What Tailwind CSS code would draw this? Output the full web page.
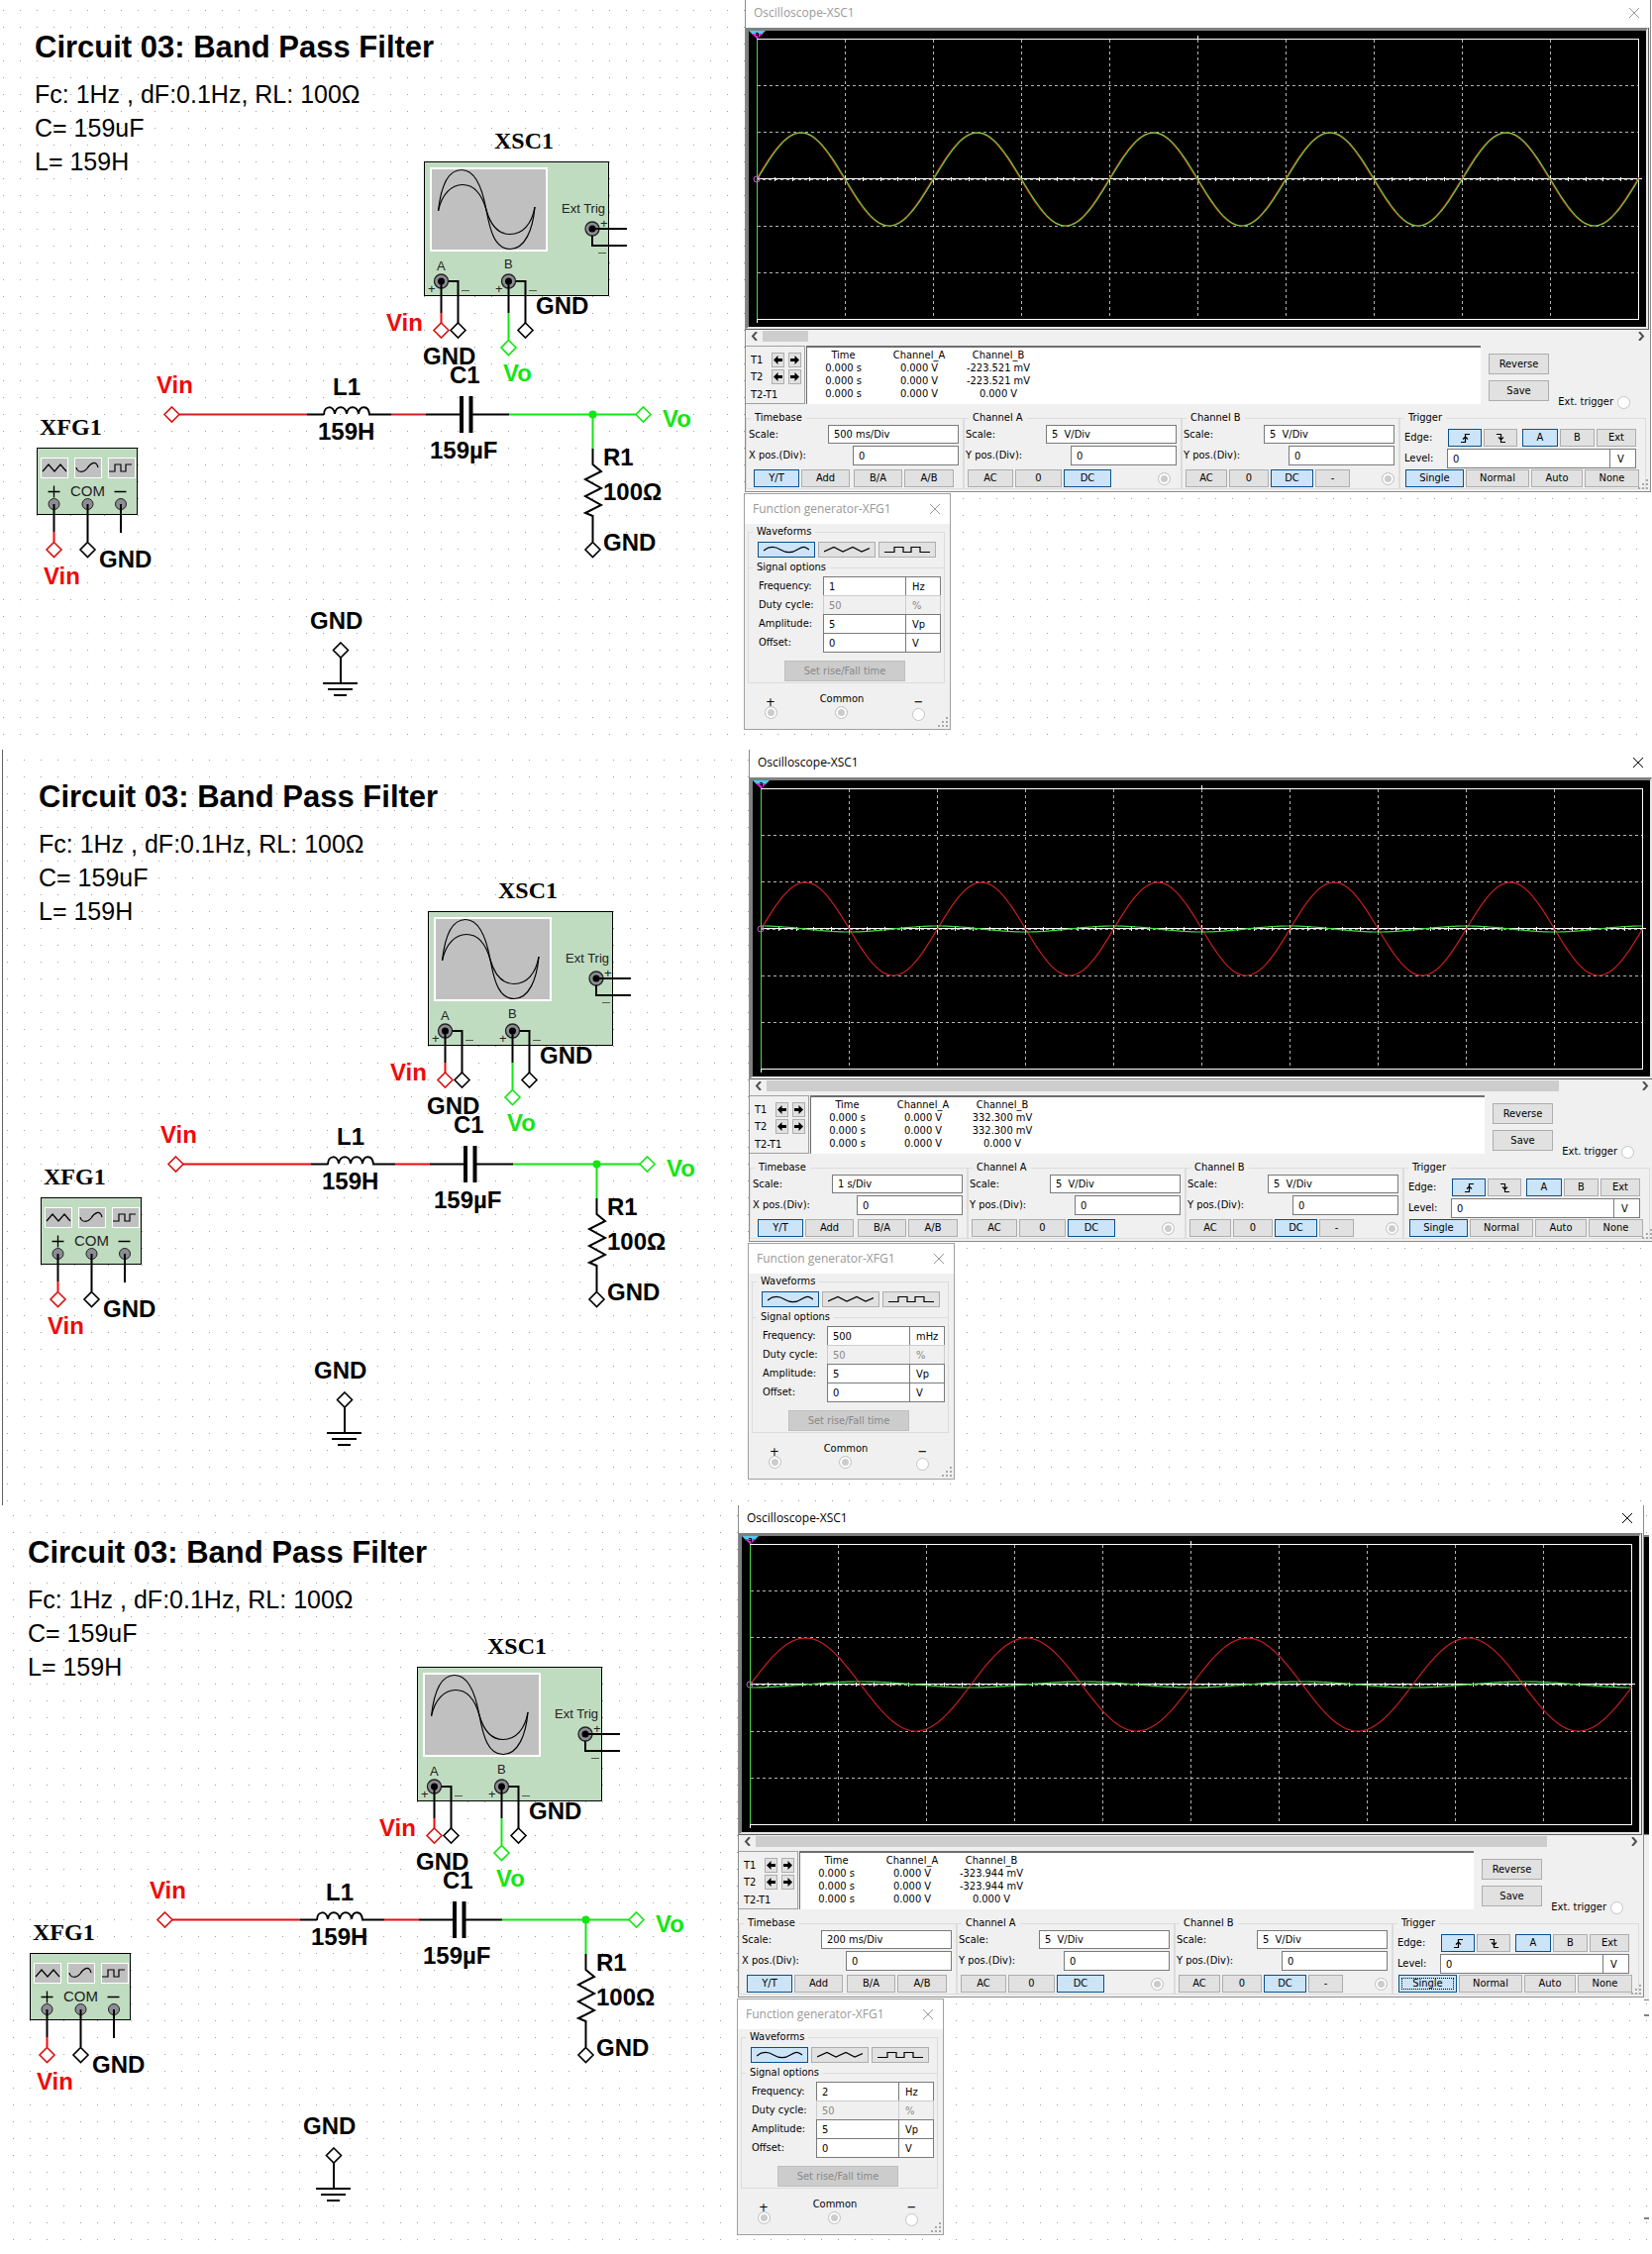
<!DOCTYPE html>
<html lang="en">
<head>
<meta charset="utf-8">
<title>Circuit 03: Band Pass Filter</title>
<script src="https://cdn.jsdelivr.net/npm/@tailwindcss/browser@4"></script>
</head>
<body class="bg-white text-black overflow-x-hidden">
<main id="app" class="flex flex-col"></main>

<script>
// One entry per simulation run
const runs = [
  {
    section: 'min-h-[757px] bg-[position:-5px_2px]', inner: 'pr-px', active: false, thumb: 46,
    scale: '500 ms/Div', b: '-223.521 mV', freq: '1', unit: 'Hz', wire: '#cc1f1f', focus: '',
    traces: [['#b02a12', 47, 178, 0, -1], ['#6fd040', 47, 178, 0, 0]], extra: ''
  },
  {
    section: 'min-h-[763px] bg-[position:-1px_2px]', inner: 'ml-1 -mr-[3px]', active: true, thumb: 800,
    scale: '1 s/Div', b: '332.300 mV', freq: '500', unit: 'mHz', wire: '#e80c0c', focus: '',
    traces: [['#c81e1e', 47, 178, 0, 0], ['#46dc46', 3, 178, Math.PI / 2, 0]],
    extra: '<div class="absolute inset-y-0 left-[2px] w-px bg-[#606060]"></div>'
  },
  {
    section: 'min-h-[756px] bg-[position:-12px_2px]', inner: '-ml-[7px] pr-2', active: true, thumb: 799,
    scale: '200 ms/Div', b: '-323.944 mV', freq: '2', unit: 'Hz', wire: '#e80c0c',
    focus: 'outline outline-1 outline-dotted outline-black -outline-offset-4',
    traces: [['#c81e1e', 47, 223, 0, 0], ['#46dc46', 3, 223, -Math.PI / 2, 0]],
    extra: `<div class="absolute top-[30px] right-[3px] w-[5px] flex flex-col">
      <div class="h-[302px] bg-black border-t-2 border-[#808080]"></div>
      <div class="h-[168px] bg-[#f0f0f0] border-y border-[#808080]"></div>
      <div class="mt-[14px] h-[2px] bg-[#808080]"></div>
      <div class="mt-[203px] h-[2px] bg-[#808080]"></div></div>`
  }
];

const diamond = (x, y, c) => `<path d="M${x} ${y - 7.5}l7.5 7.5-7.5 7.5-7.5-7.5z" fill="#fff" stroke="${c}" stroke-width="1.6"/>`;
const line = (d, c, w = 2) => `<path d="${d}" fill="none" stroke="${c}" stroke-width="${w}"/>`;
const label = (x, y, t, c = '#000') => `<text x="${x}" y="${y}" fill="${c}">${t}</text>`;

function schematic(r) {
  const g = '#14e614', red = '#f00a0a', k = '#000';
  return `<svg class="block shrink-0 w-[751px] h-[756px]" viewBox="0 0 751 756" role="img" aria-label="Band pass filter schematic">
  <text x="35" y="58" class="font-['Liberation_Sans'] font-bold text-[31px]">Circuit 03: Band Pass Filter</text>
  <g class="font-['Liberation_Sans'] text-[25px]">
    ${label(35, 104, 'Fc: 1Hz , dF:0.1Hz, RL: 100Ω')}${label(35, 138, 'C= 159uF')}${label(35, 172, 'L= 159H')}
  </g>
  <g class="font-['Liberation_Serif'] font-bold text-[24px]">${label(499, 150, 'XSC1')}${label(40, 439, 'XFG1')}</g>

  <rect x="428.5" y="163.5" width="186" height="135" fill="#c0dcc0" stroke="#000"/>
  <rect x="435" y="170" width="117" height="83" fill="#c0c0c0" stroke="#fff" stroke-width="2"/>
  <path d="M442.5 213C445 190 452 171.500 466 171.500S487 190 491 212S500 251.500 515 251.500S538 232 540 209" fill="none" stroke="#000" stroke-width="1.200"/>
  <path d="M442.500 213C446 196 456 186.500 467 186.500C480 186.500 487 198 491 212C495 226 502 236.500 515 236.500S537 226 540 209" fill="none" stroke="#000" stroke-width="1.200"/>
  <g class="font-['Liberation_Sans'] text-[13px]" fill="#222">
    <text x="567" y="215">Ext Trig</text><text x="441" y="273">A</text><text x="509" y="271">B</text>
    <text x="432" y="296">+</text><text x="500" y="296">+</text><text x="606" y="230">+</text>
  </g>
  <path d="M466 293.500h8M534 293.500h8M604 255.500h8" stroke="#555"/>
  <g fill="#8c8c94" stroke="#222" stroke-width="1.300"><circle cx="445.500" cy="284" r="7"/><circle cx="513.500" cy="284" r="7"/><circle cx="598" cy="231" r="7"/></g>
  <g><circle cx="445.500" cy="284" r="3.500"/><circle cx="513.500" cy="284" r="3.500"/><circle cx="598" cy="231" r="3.500"/></g>
  ${line('M598 231H633M598 238V248H633', k)}
  ${line('M445.500 284V316M453 284H462.500V326M513.500 284V316M521 284H530.500V326', k)}
  ${line('M445.500 316V326', red)}${line('M513.500 316V343', g)}
  ${diamond(445.5, 333.5, '#d81414')}${diamond(462.5, 333.5, k)}${diamond(530.5, 333.5, k)}${diamond(513.5, 351, g)}

  ${line('M181 418.500H310M395 418.500H430', r.wire)}
  ${line('M310 418.500H327V419C327 409 337 409 338 418C339 409 349 409 350 418C351 409 361 409 362 418C363 409 372 409 373 418.500H395M430 418.500H465M476 418.500H514', k)}
  ${line('M466 400V437M475.500 400V437', k, 4)}
  ${line('M514 418.500H642M598.500 418.500V453', g)}
  <circle cx="598.500" cy="418.500" r="4" fill="${g}"/>
  ${line('M598.500 453V469L607 476L591 484L607 493L591 501L607 510L591 518L598.500 521V547', k)}
  ${diamond(173.5, 418.5, '#d81414')}${diamond(649.5, 418.5, g)}${diamond(598.5, 555, k)}

  <rect x="37.500" y="452.500" width="101" height="67" fill="#c0dcc0" stroke="#000"/>
  <g fill="#c0c0c0" stroke="#fff"><rect x="41.500" y="462.500" width="27" height="20"/><rect x="75.500" y="462.500" width="27" height="20"/><rect x="109.500" y="462.500" width="27" height="20"/></g>
  <path d="M43 476L49 469L55 476L61 469L67 476M77 472C78 477 84 478 88 473C91 468 97 464 99 472M110 476H116V469H122V476H127V469H133" fill="none" stroke="#000" stroke-width="1.200"/>
  <path d="M48.500 496.500H60.500M54.500 490.500V502.500M115.500 496.500H127.500" stroke="#000" stroke-width="1.300"/>
  <text x="71" y="501" class="font-['Liberation_Sans'] text-[15px]" fill="#222">COM</text>
  <g fill="#8c8c94" stroke="#222"><circle cx="54.500" cy="509" r="5.500"/><circle cx="88.500" cy="509" r="5.500"/><circle cx="122" cy="509" r="5.500"/></g>
  ${line('M54.500 509V537M88.500 509V547M122 509V538', k)}${line('M54.500 537V547', red)}
  ${diamond(54.5, 555, '#d81414')}${diamond(88.5, 555, k)}

  ${line('M344 664V690M326 690H361M331 696H356M337 702H350', k)}${diamond(344, 656.5, k)}

  <g class="font-['Liberation_Sans'] font-bold text-[24px]">
    ${label(541, 317, 'GND')}${label(390, 334, 'Vin', red)}${label(427, 368, 'GND')}
    ${label(454, 387, 'C1')}${label(508, 385, 'Vo', g)}${label(158, 397, 'Vin', red)}
    ${label(336, 399, 'L1')}${label(321, 444, '159H')}${label(434, 463, '159µF')}
    ${label(669, 431, 'Vo', g)}${label(609, 470, 'R1')}${label(609, 505, '100Ω')}${label(609, 556, 'GND')}
    ${label(44, 590, 'Vin', red)}${label(100, 573, 'GND')}${label(313, 635, 'GND')}
  </g></svg>`;
}

// Screen: 10 x 6 divisions of 89 x 47 units, zero line at y = 150
function screen(r) {
  let v = '', t = '';
  for (let i = 1; i < 10; i++) v += `M${8.5 + 89 * i} 9V291`;
  for (let i = 0; i <= 50; i++) { const s = i % 5 ? 2 : 4; t += `M${Math.round(8 + 17.8 * i) + .5} ${150 - s}v${2 * s}`; }
  const wave = ([c, amp, period, phase, dx]) => {
    let d = '';
    for (let x = 0; x <= 890; x += 2) d += (x ? 'L' : 'M') + (8.5 + x) + ' ' + (150 - amp * Math.sin((x - dx) / period * 2 * Math.PI + phase)).toFixed(1);
    return `<path d="${d}" fill="none" stroke="${c}" stroke-width="1.200"/>`;
  };
  return `<svg class="block w-full h-[299px]" viewBox="0 0 906 299" preserveAspectRatio="none" role="img" aria-label="Oscilloscope traces">
    <path d="${v}M9 55.500H898M9 102.500H898M9 197.500H898M9 244.500H898" stroke="#b4b4b4" stroke-dasharray="3 3" fill="none"/>
    <rect x="8.500" y="8.500" width="890" height="283" fill="none" stroke="#fff"/>
    <path d="M453.500 5V8M8.500 291V295" stroke="#fff"/>
    <path d="M8 149.500H902" stroke="#fff"/><path d="M8 150.500H899" stroke="#aaa" stroke-dasharray="3 3"/>
    <path d="${t}" stroke="#fff"/>
    ${r.traces.map(wave).join('')}
    <path d="M8.500 9V291" stroke="#46dc46"/>
    <path d="M0 0H17L13 4H4z" fill="#50c8f0"/><path d="M3 3H14L8.500 8.500z" fill="#dc28dc"/>
    <path d="M7 2.500H9.500V6.500M7 4.500h2" stroke="#000" fill="none"/>
    <circle cx="8" cy="150" r="3" fill="none" stroke="#c060d0"/>
  </svg>`;
}

const btn = (t, w, on = false, more = '') =>
  `<button type="button" class="h-full ${w} flex items-center justify-center border ${on ? 'border-[#0a508c] bg-[#cce4f7]' : 'border-[#adadad] bg-[#e1e1e1]'} ${more}">${t}</button>`;
const arrow = (left) => `<button type="button" aria-label="${left ? 'Step back' : 'Step forward'}" class="w-[13px] h-[15px] flex items-center justify-center border border-[#adadad] bg-[#e1e1e1]"><svg class="block w-[9px] h-[9px]" viewBox="0 0 9 9"><path d="${left ? 'M0 4.500L4.500 0V3H9V6H4.500V9z' : 'M9 4.500L4.500 0V3H0V6H4.500V9z'}"/></svg></button>`;
const radio = (name, on, more = '') => `<input type="radio" aria-label="${name}" ${on ? 'checked' : ''} class="appearance-none block shrink-0 size-[13px] rounded-full border border-[#c4c4c4] ${on ? 'bg-[#cccccc] shadow-[inset_0_0_0_2px_#fff]' : 'bg-white'} ${more}">`;
const field = (id, value, w, more = 'px-[5px]') => `<input id="${id}" aria-label="${id}" value="${value}" class="block h-full min-w-0 ${w} border border-[#7a7a7a] bg-white ${more}">`;
const grip = `<svg class="absolute right-px bottom-px w-[11px] h-[11px]" viewBox="0 0 11 11" fill="#a8a8a8" aria-hidden="true"><path d="M8 0h2v2h-2zM8 4h2v2h-2zM8 8h2v2h-2zM4 4h2v2h-2zM4 8h2v2h-2zM0 8h2v2h-2z"/></svg>`;
const close = (on) => `<button type="button" aria-label="Close" class="flex size-[12px] items-center justify-center"><svg class="block size-[10px]" viewBox="0 0 10 10"><path d="M0 0L10 10M10 0L0 10" stroke="${on ? '#000' : '#999'}" fill="none"/></svg></button>`;
const box = 'min-w-0 border border-[#dcdcdc] pb-px';
const cap = (t) => `<legend class="ml-1 px-1 h-[14px] leading-[14px]">${t}</legend>`;

function channel(n, i, r) {
  return `<fieldset class="${box} w-[220px]">${cap('Channel ' + n)}
    <div class="flex items-center justify-between h-[19px] pl-px pr-1"><label for="scale${n}${i}">Scale:</label>${field('scale' + n + i, '5&nbsp; V/Div', 'w-[132px]')}</div>
    <div class="mt-[2px] flex items-center justify-between h-[20px] pl-px pr-1"><label for="ypos${n}${i}">Y pos.(Div):</label>${field('ypos' + n + i, '0', 'w-[107px]')}</div>
    <div class="mt-1 flex items-center gap-[2px] h-[18px] pl-[3px] pr-[8px]">
      ${n === 'A' ? btn('AC', 'w-[46px]') + btn('0', 'w-[47px]') + btn('DC', 'w-[48px]', true)
                  : btn('AC', 'w-[42px]') + btn('0', 'w-[40px]') + btn('DC', 'w-[43px]', true) + btn('-', 'w-[35px]')}
      ${radio('Channel ' + n + ' input', true, n === 'A' ? 'ml-auto mr-[2px]' : 'ml-auto -mr-[4px]')}
    </div></fieldset>`;
}

function scope(r, i) {
  const rise = '<svg class="block size-[11px]" viewBox="0 0 11 11"><path d="M1 9.500H5.500V1.500H10M3 6.500L5.500 4L8 6.500" fill="none" stroke="#000" stroke-width="1.200"/></svg>';
  const fall = '<svg class="block size-[11px]" viewBox="0 0 11 11"><path d="M1 1.500H5.500V9.500H10M3 4.500L5.500 7L8 4.500" fill="none" stroke="#000" stroke-width="1.200"/></svg>';
  const row = (b) => `<tr><td>0.000 s</td><td>0.000 V</td><td>${b}</td></tr>`;
  return `<div class="relative ml-px border-x border-b border-[#8c8c8c] bg-[#f0f0f0] pb-[2px]">
    <div class="h-7 bg-white flex items-center justify-between pl-2 pr-[10px] pb-[3px] font-['Open_Sans'] text-[12px] ${r.active ? 'text-black' : 'text-[#999]'}"><span>Oscilloscope-XSC1</span>${close(r.active)}</div>
    <div class="pr-px"><div class="border-r border-b border-[#606060]"><div class="border-t-3 border-l-3 border-r-2 border-b-2 border-t-[#808080] border-l-[#808080] border-r-[#e8e8e8] border-b-[#e8e8e8] bg-black">${screen(r)}</div></div></div>
    <div class="h-4 flex items-center px-[5px] pb-[3px]">
      <svg class="block w-[7px] h-[9px] mr-[5px]" viewBox="0 0 7 9"><path d="M6 0L2 4.500L6 9" fill="none" stroke="#505050" stroke-width="2"/></svg>
      <div class="h-[11px] bg-[#cdcdcd]" style="width:${r.thumb}px"></div>
      <svg class="block w-[7px] h-[9px] ml-auto" viewBox="0 0 7 9"><path d="M1 0L5 4.500L1 9" fill="none" stroke="#505050" stroke-width="2"/></svg>
    </div>
    <div class="flex h-[59px]">
      <div class="w-[60px] mr-px shrink-0 border-t border-r border-b border-[#a0a0a0] pl-[5px] pt-[6px]">
        <div class="flex flex-col gap-[2px]">
          <div class="flex items-center gap-1"><span class="w-[17px]">T1</span>${arrow(true)}${arrow(false)}</div>
          <div class="flex items-center gap-1"><span class="w-[17px]">T2</span>${arrow(true)}${arrow(false)}</div>
          <div class="pt-[2px]">T2-T1</div>
        </div>
      </div>
      <div class="flex-1 min-w-0 bg-white border-t-2 border-l border-t-[#6e6e6e] border-l-[#6e6e6e]">
        <table class="mt-px w-[233px] table-fixed text-center leading-[13px]">
          <thead><tr><th class="w-[73px] font-normal">Time</th><th class="w-[80px] font-normal">Channel_A</th><th class="w-[80px] font-normal">Channel_B</th></tr></thead>
          <tbody>${row(r.b)}${row(r.b)}${row('0.000 V')}</tbody>
        </table>
      </div>
      <div class="w-[171px] shrink-0 flex justify-between pl-2 pr-5">
        <div class="flex flex-col gap-[6px] pt-2"><div class="h-[21px]">${btn('Reverse', 'w-[61px]')}</div><div class="h-[21px]">${btn('Save', 'w-[61px]')}</div></div>
        <label class="flex items-center gap-1 self-end -mb-[5px] whitespace-nowrap">Ext. trigger ${radio('Ext. trigger', false)}</label>
      </div>
    </div>
    <div class="flex pt-[7px] pr-1">
      <fieldset class="${box} flex-1">${cap('Timebase')}
        <div class="flex items-center justify-between h-[19px] pl-[2px] pr-1"><label for="scaleT${i}">Scale:</label>${field('scaleT' + i, r.scale, 'w-[132px]')}</div>
        <div class="mt-[2px] flex items-center justify-between h-[20px] pl-[2px] pr-1"><label for="xpos${i}">X pos.(Div):</label>${field('xpos' + i, '0', 'w-[107px]')}</div>
        <div class="mt-1 flex gap-[2px] h-[18px] pl-[7px]">${btn('Y/T', 'w-[46px]', true)}${btn('Add', 'w-[49px]', false, 'mr-[2px]')}${btn('B/A', 'w-[49px]')}${btn('A/B', 'w-[50px]')}</div>
      </fieldset>
      ${channel('A', i, r)}${channel('B', i, r)}
      <fieldset class="${box} w-[249px]">${cap('Trigger')}
        <div class="flex items-center h-[22px] pt-1 pl-[4px] pr-[9px] gap-[2px]"><span class="mr-auto">Edge:</span>
          ${btn(rise, 'w-[34px]', true)}${btn(fall, 'w-[34px]', false, 'mr-[3px]')}${btn('A', 'w-[36px]', true)}${btn('B', 'w-[35px]')}${btn('Ext', 'w-[40px]')}</div>
        <div class="mt-[2px] flex items-center h-[20px] pl-[4px] pr-[9px]"><label for="level${i}" class="mr-auto">Level:</label>${field('level' + i, '0', 'w-[165px]')}${field('levelUnit' + i, 'V', 'w-[27px]', '-ml-px px-[7px]')}</div>
        <div class="mt-px flex gap-[2px] h-[18px] pl-[5px]">${btn('Single', 'w-[59px]', true, r.focus)}${btn('Normal', 'w-[64px]')}${btn('Auto', 'w-[52px]')}${btn('None', 'w-[55px]')}</div>
      </fieldset>
    </div>
    ${grip}
  </div>`;
}

function generator(r, i) {
  const row = (t, v, u, off) => `<div class="flex items-center h-[20px]"><label for="${t}${i}" class="flex-1">${t}:</label>
    <input id="${t}${i}" value="${v}" ${off ? 'disabled' : ''} class="h-full w-[84px] border px-[5px] ${off ? 'border-[#cccccc] bg-[#f0f0f0] text-[#888]' : 'border-[#7a7a7a] bg-white'}"><input aria-label="${t} unit" value="${u}" ${off ? 'disabled' : ''} class="-ml-px h-full w-[36px] border pl-[6px] ${off ? 'border-[#cccccc] bg-[#f0f0f0] text-[#888]' : 'border-[#7a7a7a] bg-white'}"></div>`;
  const pic = (d) => `<svg class="block w-[46px] h-[8px]" viewBox="0 0 46 8"><path d="${d}" fill="none" stroke="#000" stroke-width="1.200"/></svg>`;
  return `<div class="relative mt-px w-[209px] border border-[#a0a0a0] bg-[#f0f0f0] h-[239px]">
    <div class="h-[30px] bg-white flex items-center justify-between pl-2 pr-[9px] font-['Open_Sans'] text-[12px] text-[#999]"><span>Function generator-XFG1</span>${close(false)}</div>
    <fieldset class="${box} mt-px ml-[3px] mr-[5px] pb-[3px]">${cap('Waveforms')}
      <div class="mt-[3px] flex gap-[3px] h-4 pl-[9px]">
        ${btn(pic('M0 5C6 0 12 1 17 4S28 8 34 4S42 1 46 4'), 'w-[58px]', true)}${btn(pic('M0 6L10 1.500L19 6L29 1.500L38 6L46 2.500'), 'w-[58px]')}${btn(pic('M0 6.500H10V1.500H19V6.500H27V1.500H36V6.500H46'), 'w-[58px]')}
      </div>
      <fieldset class="min-w-0 border-t border-[#dcdcdc] mt-[3px]">${cap('Signal options')}
        <div class="mt-[2px] flex flex-col -space-y-px pl-[10px] pr-[3px]">
          ${row('Frequency', r.freq, r.unit)}${row('Duty cycle', '50', '%', true)}${row('Amplitude', '5', 'Vp')}${row('Offset', '0', 'V')}
        </div>
        <div class="mt-[8px] h-[21px] flex pl-[36px]"><button type="button" disabled class="h-full w-[122px] border border-[#bfbfbf] bg-[#cccccc] text-[#888]">Set rise/Fall time</button></div>
      </fieldset>
    </fieldset>
    <div class="mt-[9px] grid grid-cols-[52px_92px_1fr] justify-items-center">
      <label class="flex flex-col items-center"><span class="h-[14px] text-[13px] pt-[3px] leading-[14px]">+</span>${radio('Positive', true)}</label>
      <label class="flex flex-col items-center"><span class="h-[14px]">Common</span>${radio('Common', true)}</label>
      <label class="flex flex-col items-center"><span class="h-[14px] text-[13px] pt-[3px] leading-[14px]">−</span>${radio('Negative', false, 'mt-[2px]')}</label>
    </div>
    ${grip}
  </div>`;
}

document.getElementById('app').innerHTML = runs.map((r, i) => `
  <section class="relative overflow-hidden bg-[radial-gradient(circle,#a0a0a0_0,transparent_1px)] bg-[size:17px_17px] ${r.section}">
    ${r.extra}
    <div class="flex ${r.inner}">
      ${schematic(r)}
      <div class="flex-1 min-w-0 font-['DejaVu_Sans_Condensed','Noto_Sans',sans-serif] text-[11px] leading-[14px]">
        ${scope(r, i)}
        ${generator(r, i)}
      </div>
    </div>
  </section>`).join('');
</script>
</body>
</html>
